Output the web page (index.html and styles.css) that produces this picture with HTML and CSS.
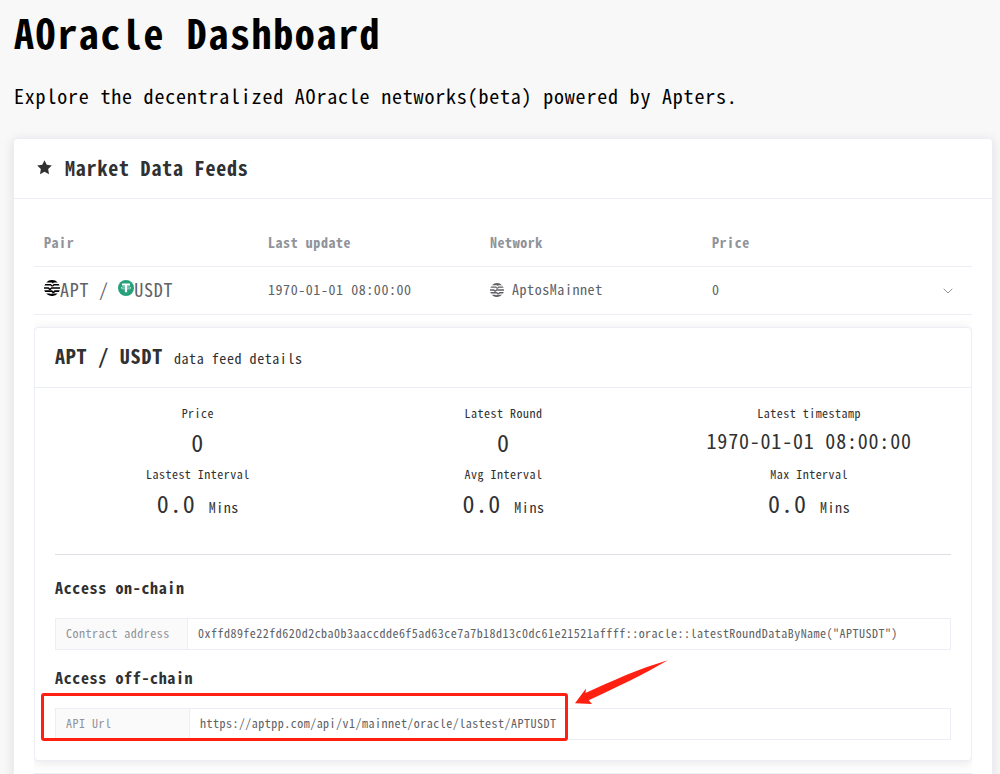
FILE: index.html
```html
<!DOCTYPE html>
<html lang="en">
<head>
<meta charset="utf-8">
<title>AOracle Dashboard</title>
<link rel="stylesheet" href="styles.css">
</head>
<body>
<svg class="defs" width="0" height="0">
  <symbol id="aptos" viewBox="0 0 16 16">
    <path d="M2.2 2.5A8 8 0 0 1 13.8 2.5H9.9L8.9 3.5 7.9 2.5ZM.5 5.5A8 8 0 0 1 1.3 4H7L8.3 5.4 9.6 4H14.7A8 8 0 0 1 15.5 5.5H10.2L9 6.6H7.7L6.5 5.5ZM0 8.8V7.2H4.6L6 8.4 7.3 7.2H16V8.8H7.7L6.6 10H5.2L4.1 8.8ZM1 11.9L.3 10.3H8L9.3 11.6 10.6 10.3H15.7L15 11.9H11.3L10 12.9H8.7L7.5 11.9ZM3 14.2L2.2 13.4H5.8L7 14 8.2 13.4H13.8A8 8 0 0 1 3 14.2Z"/>
  </symbol>
</svg>
<main class="page">
  <h1 class="title">AOracle Dashboard</h1>
  <p class="intro">Explore the decentralized AOracle networks(beta) powered by Apters.</p>
  <section class="card feeds">
    <header class="card-head">
      <svg class="star" viewBox="0 0 16 16"><path d="M8 .2 10.4 5.1 15.8 5.9 11.9 9.7 12.8 15.1 8 12.6 3.2 15.1 4.1 9.7.2 5.9 5.6 5.1Z"/></svg>
      <h2 class="heading">Market Data Feeds</h2>
    </header>
    <div class="feeds-body">
      <div class="row row-head">
        <div>Pair</div><div>Last update</div><div>Network</div><div>Price</div>
      </div>
      <div class="row row-data">
        <div class="pair">
          <svg class="coin"><use href="#aptos"/></svg><span>APT / </span><svg class="coin" viewBox="0 0 16 16"><circle cx="8" cy="8" r="8" fill="#26a17b"/><path d="M4 3.5H12V5.6H9.1V12.3H6.9V5.6H4Z" fill="#fff"/><ellipse cx="8" cy="7.9" rx="5" ry="1.1" fill="none" stroke="#fff" stroke-width=".6"/></svg><span>USDT</span>
        </div>
        <div>1970-01-01 08:00:00</div>
        <div class="network"><svg class="net-icon"><use href="#aptos" width="14" height="14"/></svg><span>AptosMainnet</span></div>
        <div>0</div>
        <svg class="chevron" viewBox="0 0 10 6"><path d="M.7.8 5 5 9.3.8"/></svg>
      </div>
      <div class="expanded">
        <article class="card detail">
          <header class="detail-head"><h3 class="heading">APT / USDT</h3><span class="sub">data feed details</span></header>
          <div class="stats">
            <div class="stat"><span class="label">Price</span><span class="value">0</span></div>
            <div class="stat"><span class="label">Latest Round</span><span class="value">0</span></div>
            <div class="stat"><span class="label">Latest timestamp</span><span class="value time">1970-01-01 08:00:00</span></div>
            <div class="stat"><span class="label">Lastest Interval</span><span class="value">0.0 <small class="unit">Mins</small></span></div>
            <div class="stat"><span class="label">Avg Interval</span><span class="value">0.0 <small class="unit">Mins</small></span></div>
            <div class="stat"><span class="label">Max Interval</span><span class="value">0.0 <small class="unit">Mins</small></span></div>
          </div>
          <div class="access">
            <h4 class="access-title">Access on-chain</h4>
            <div class="field"><span class="key">Contract address</span><span class="val">0xffd89fe22fd620d2cba0b3aaccdde6f5ad63ce7a7b18d13c0dc61e21521affff::oracle::latestRoundDataByName("APTUSDT")</span></div>
            <h4 class="access-title">Access off-chain</h4>
            <div class="field"><span class="key key-api">API Url</span><span class="val">https://aptpp.com/api/v1/mainnet/oracle/lastest/APTUSDT</span></div>
          </div>
        </article>
      </div>
    </div>
  </section>
  <div class="highlight"></div>
  <svg class="arrow" viewBox="0 0 100 50"><path d="M5 43.2 16 28.4 15.5 33 C42 21 68 9 98 .3 C74 14 48 27 18.7 40.2 L22 44Z"/></svg>
</main>
</body>
</html>
```
FILE: styles.css
```css
* { box-sizing: border-box; }
body {
  margin: 0;
  height: 774px;
  overflow: hidden;
  background: #f8f8f8;
  color: #303133;
  font-family: "Noto Sans Mono CJK SC", "DejaVu Sans Mono", monospace;
  font-feature-settings: "zero";
  font-size: 14px;
}
h1, h2, h3, h4, p { margin: 0; }
.defs { position: absolute; }
.page { position: relative; height: 774px; overflow: hidden; padding: 0 7px 0 14px; }
.page * { letter-spacing: .04em; }
.title { color: #000; font-size: 40px; line-height: 48px; padding-top: 8px; }
.intro { color: #000; font-size: 20px; line-height: 28px; margin-top: 26px; }
.card { background: #fff; border: 1px solid #ebeef5; border-radius: 4px; box-shadow: 0 2px 12px rgba(0, 0, 0, .1); }
.feeds { height: 700px; margin: 28px 0 0 -1px; }
.card-head { display: flex; align-items: center; height: 60px; padding: 0 0 2px 23px; border-bottom: 1px solid #ebeef5; }
.star { width: 15px; height: 15px; fill: #303133; margin-right: 13px; }
.heading { font-size: 20px; line-height: 28px; }
.feeds-body { padding: 20px; }
.row { display: grid; grid-template-columns: 224px 222px 222px 1fr auto; align-items: center; height: 48px; padding: 0 19px 0 10px; border-bottom: 1px solid #ebeef5; color: #606266; }
.row-head { font-weight: 700; color: #909399; padding-bottom: 2px; }
.row-data > div { padding-bottom: 3px; }
.pair { display: flex; align-items: center; font-size: 18px; }
.pair span { white-space: pre; }
.coin { width: 16px; height: 16px; fill: #000; margin: -2px 0 0 0; }
.network { display: flex; align-items: center; }
.net-icon { width: 14px; height: 14px; fill: #606266; margin: 1px 8px 0 0; }
.chevron { width: 10px; height: 6px; fill: none; stroke: #909399; stroke-width: 1; }
.expanded { padding: 12px 0; overflow: hidden; border-bottom: 1px solid #ebeef5; }
.detail { height: 434px; }
.detail-head { display: flex; align-items: baseline; height: 60px; padding: 14px 20px 0; border-bottom: 1px solid #ebeef5; }
.sub { margin-left: 11px; }
.stats { display: grid; grid-template-columns: repeat(3, 1fr); grid-auto-rows: 61px; margin: 15px 9px 0 10px; }
.stat { display: flex; flex-direction: column; align-items: center; }
.label { font-size: 12px; line-height: 20px; }
.value { font-size: 24px; line-height: 32px; margin-top: 3px; }
.time { font-size: 20px; line-height: 28px; margin-top: 4px; }
.unit { font-size: 14px; }
.access { margin: 29px 20px 0; border-top: 1px solid #dcdfe6; padding-top: 20px; }
.access-title { font-size: 16px; line-height: 24px; }
.field { display: flex; height: 32px; margin: 19px 0 15px; border: 1px solid #ebeef5; font-size: 12px; line-height: 28px; color: #606266; }
.key { width: 132px; padding-left: 10px; background: #fafafa; border-right: 1px solid #ebeef5; color: #909399; }
.key-api { width: 134px; }
.val { padding-left: 10px; }
.highlight { position: absolute; left: 41px; top: 693px; width: 527px; height: 48px; border: 3px solid #ff2012; border-radius: 3px; }
.arrow { position: absolute; left: 570px; top: 660px; width: 100px; height: 50px; fill: #ff2012; }
```
